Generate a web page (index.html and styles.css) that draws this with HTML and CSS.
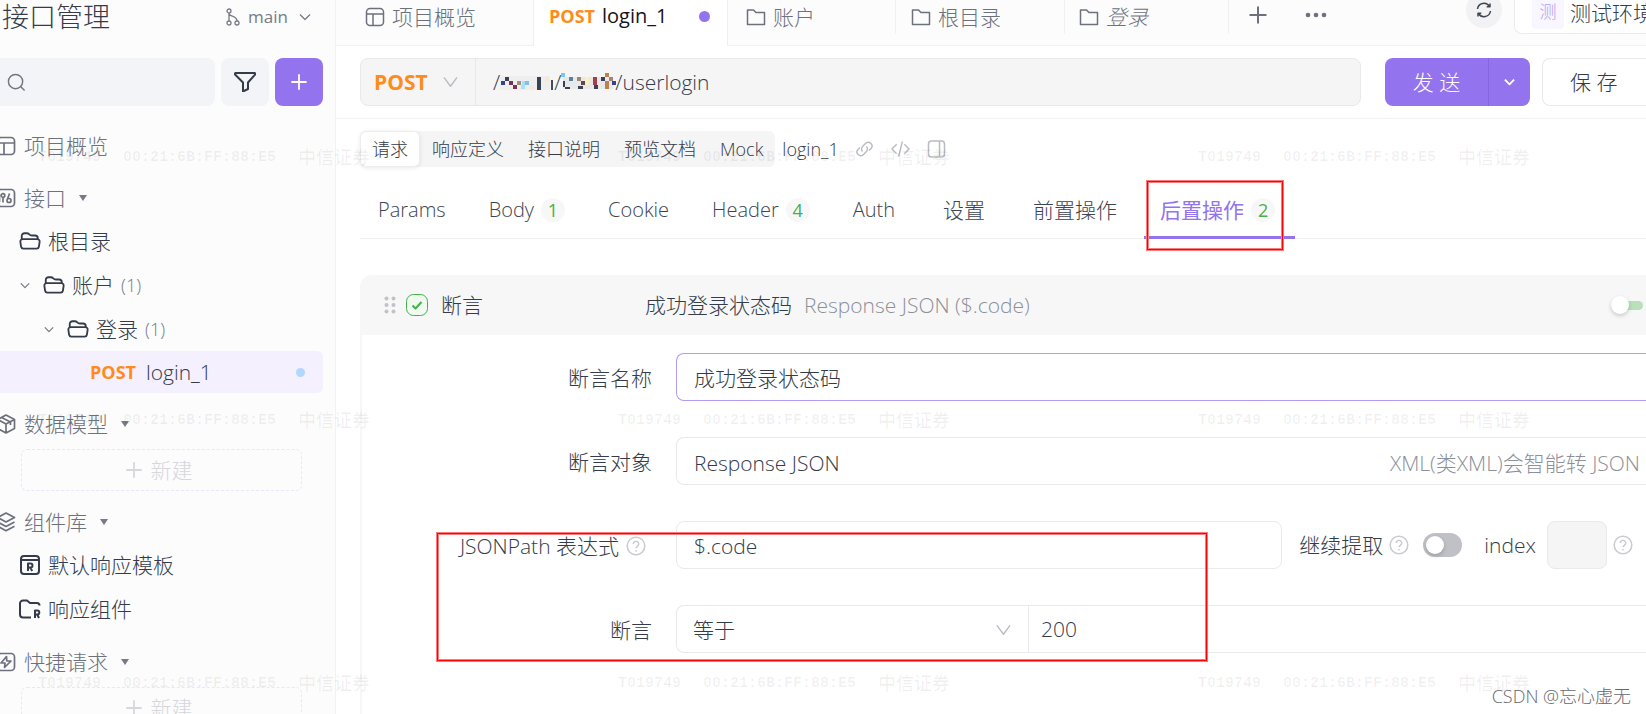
FILE: index.html
```html
<!DOCTYPE html>
<html lang="zh-CN">
<head>
<meta charset="utf-8">
<title>接口管理</title>
<link rel="stylesheet" href="styles.css">
</head>
<body>
<svg class="defs" aria-hidden="true">
  <symbol id="i-layout" viewBox="0 0 20 20"><rect x="1.5" y="1.5" width="17" height="17" rx="3.5"/><path d="M1.5 7h17M8 7v11.5"/></symbol>
  <symbol id="i-folder" viewBox="0 0 20 20"><path d="M1.5 3h6l2.500 2.500h8.500v12h-17z"/></symbol>
  <symbol id="i-open" viewBox="0 0 24 20"><path d="M3 9V4.500a3 3 0 0 1 3-3h2.500c3 0 2.500 2.500 5.500 2.500h3.500a3 3 0 0 1 3 3V8.500M4 8h16a2.500 2.500 0 0 1 2.500 3l-.8 5.300a2.500 2.500 0 0 1-2.500 2H4.800a2.500 2.500 0 0 1-2.500-2L1.500 11A2.500 2.500 0 0 1 4 8z"/></symbol>
  <symbol id="i-down" viewBox="0 0 12 8"><path d="M1 1.500l5 5 5-5"/></symbol>
  <symbol id="i-wide" viewBox="0 0 16 12"><path d="M1 1l7 9.500L15 1"/></symbol>
  <symbol id="i-plus" viewBox="0 0 20 20"><path d="M10 1.500v17M1.500 10h17"/></symbol>
  <symbol id="i-help" viewBox="0 0 20 20"><circle cx="10" cy="10" r="8.800"/><path d="M7.300 8a2.700 2.700 0 1 1 4.200 2.200c-1 .7-1.500 1-1.500 2M10 14v1.500"/></symbol>
</svg>

<div class="app">
  <aside class="sidebar">
    <header class="side-head">
      <h1>接口管理</h1>
      <button class="branch" type="button">
        <svg class="branch-icon" viewBox="0 0 14 18"><circle cx="3" cy="3" r="2"/><circle cx="3" cy="15" r="2"/><circle cx="11" cy="15" r="2"/><path d="M3 5v8M3 6c1 3 8 1 8 7"/></svg>
        <span>main</span>
        <svg class="chev"><use href="#i-down"/></svg>
      </button>
    </header>

    <div class="side-tools">
      <label class="search">
        <svg viewBox="0 0 20 20"><circle cx="9" cy="9" r="7.500"/><path d="M14.500 14.500L18.500 18.500"/></svg>
        <input type="text" aria-label="搜索">
      </label>
      <button class="tool" type="button" aria-label="筛选"><svg viewBox="0 0 22 20"><path d="M2 1h18a1 1 0 0 1 .8 1.800L14 10.500V17l-5 2.500v-9L1.300 2.800A1 1 0 0 1 2 1z"/></svg></button>
      <button class="tool tool-add" type="button" aria-label="新建"><svg><use href="#i-plus"/></svg></button>
    </div>

    <nav class="tree">
      <a class="section" href="#"><svg><use href="#i-layout"/></svg>项目概览</a>
      <a class="section" href="#"><svg viewBox="0 0 20 20"><rect x="1.500" y="1.500" width="17" height="17" rx="3.500"/><circle cx="7" cy="7.500" r="1.800"/><path d="M7 9.500V14.500M3.500 6v8M13.500 5.500L11.500 11"/><circle cx="13" cy="12.500" r="2"/></svg>接口<i class="caret"></i></a>
      <a class="node lv1" href="#"><svg><use href="#i-open"/></svg>根目录</a>
      <a class="node lv2" href="#"><svg class="fold"><use href="#i-down"/></svg><svg><use href="#i-open"/></svg>账户<span class="count">(1)</span></a>
      <a class="node lv3" href="#"><svg class="fold"><use href="#i-down"/></svg><svg><use href="#i-open"/></svg>登录<span class="count">(1)</span></a>
      <a class="node leaf" href="#"><b>POST</b>login_1<i class="dot"></i></a>
      <a class="section" href="#"><svg viewBox="0 0 20 20"><path d="M10 1l8.500 4.500v9L10 19l-8.500-4.500v-9zM1.500 5.500L10 10l8.500-4.500M10 10v9M5.500 3.500L14.500 8v3"/></svg>数据模型<i class="caret"></i></a>
      <button class="create" type="button"><svg><use href="#i-plus"/></svg>新建</button>
      <a class="section" href="#"><svg viewBox="0 0 20 20"><path d="M10 1l8.500 4.500L10 10 1.500 5.500zM1.500 10L10 14.500 18.500 10M1.500 14.200L10 18.700l8.500-4.500"/></svg>组件库<i class="caret"></i></a>
      <a class="node lv1" href="#"><svg viewBox="0 0 22 20"><rect x="2" y="1" width="18" height="18" rx="3"/><path d="M2 5h18M9 16V8.500h2.500a2 2 0 0 1 0 4H9M11.200 12.500l2 3.500"/></svg>默认响应模板</a>
      <a class="node lv1" href="#"><svg viewBox="0 0 22 20"><path d="M12 18.500H4a3 3 0 0 1-3-3v-11a3 3 0 0 1 3-3h4l3 2.500h7a2.500 2.500 0 0 1 2.500 2.500M16 19v-7.500h2.300a2 2 0 0 1 0 4H16M18.200 15.500L20 19"/></svg>响应组件</a>
      <a class="section" href="#"><svg viewBox="0 0 20 20"><rect x="1.500" y="1.500" width="17" height="17" rx="3.500"/><path d="M10.500 4.500L5 11h4l-.5 4.500L15 9h-4.200z"/></svg>快捷请求<i class="caret"></i></a>
      <button class="create" type="button"><svg><use href="#i-plus"/></svg>新建</button>
    </nav>
  </aside>

  <main class="main">
    <div class="tabbar">
      <a class="tab tab-first" href="#"><svg><use href="#i-layout"/></svg>项目概览</a>
      <a class="tab tab-active" href="#"><b>POST</b>login_1<i class="dot"></i></a>
      <a class="tab" href="#"><svg><use href="#i-folder"/></svg>账户</a>
      <a class="tab" href="#"><svg><use href="#i-folder"/></svg>根目录</a>
      <a class="tab" href="#"><svg><use href="#i-folder"/></svg><em>登录</em></a>
      <button class="tab-btn" type="button" aria-label="新标签"><svg><use href="#i-plus"/></svg></button>
      <button class="tab-btn" type="button" aria-label="更多"><svg class="more" viewBox="0 0 22 6"><circle cx="3" cy="3" r="2.300"/><circle cx="11" cy="3" r="2.300"/><circle cx="19" cy="3" r="2.300"/></svg></button>
      <button class="sync" type="button" aria-label="刷新"><svg viewBox="0 0 16 16"><path d="M1.500 7A6.500 6.500 0 0 1 13.500 4.500M14.500 9A6.500 6.500 0 0 1 2.500 11.500M14 1.500v3.300h-3.300M2 14.500v-3.300h3.300"/></svg></button>
      <button class="env" type="button"><span>测</span>测试环境</button>
    </div>

    <div class="request">
      <div class="url">
        <div class="pick pick-method">
          <select aria-label="请求方法"><option>POST</option></select>
          <svg><use href="#i-wide"/></svg>
        </div>
        <div class="path">
          <span>/</span>
          <svg viewBox="0 -3 54 20"><path fill="#eeeeef" d="M0 1h50v14H0z"/><path fill="#3b3f8c" d="M1 6h4v4H1z"/><path fill="#3a4152" d="M5 2h4v4H5zM37 2h4v13h-4z"/><path fill="#a08f80" d="M17 6h4v4h-4z"/><path fill="#7b3350" d="M9 6h4v4H9zM13 10h4v4h-4z"/><path fill="#a9dcf7" d="M21 10h4v4h-4zM22 6h5v4h-5z"/><path fill="#82bff0" d="M25 6h4v4h-4z"/><path fill="#f5e8d4" d="M30 10h4v4h-4zM45 2h4v4h-4z"/><path fill="#454b5a" d="M51 5h2v10h-2z"/></svg>
          <span>/</span>
          <svg viewBox="0 -3 54 20"><path fill="#e9e9ea" d="M2 2h50v12H2z"/><path fill="#7cc4f5" d="M0-2h4v4H0z"/><path fill="#3a4152" d="M2 6h2v6H2zM4 12h5v2H4zM17 11h5v3h-5zM33 10h4v4h-4zM40 2h4v4h-4z"/><path fill="#5d7f9e" d="M8 2h4v4H8z"/><path fill="#9d8875" d="M16 2h4v4h-4zM48 2h4v4h-4z"/><path fill="#5b4a50" d="M20 6h4v4h-4z"/><path fill="#f7f2c4" d="M24 2h4v8h-4z"/><path fill="#a33d50" d="M32 2h4v8h-4z"/><path fill="#bd8150" d="M44-2h4v4h-4zM44 6h4v8h-4z"/><path fill="#3b3f8c" d="M51 6h4v4h-4z"/></svg>
          <input type="text" value="/userlogin" aria-label="接口路径">
        </div>
      </div>
      <div class="send">
        <button type="button">发 送</button>
        <button class="send-more" type="button" aria-label="更多发送选项"><svg><use href="#i-down"/></svg></button>
      </div>
      <button class="save" type="button">保 存</button>
    </div>

    <div class="views">
      <div class="segments">
        <button class="on" type="button">请求</button>
        <button type="button">响应定义</button>
        <button type="button">接口说明</button>
        <button type="button">预览文档</button>
        <button type="button">Mock</button>
      </div>
      <span class="name">login_1</span>
      <svg viewBox="0 0 18 18"><path d="M7 11.500a4 4 0 0 1 .5-5.500l3-3a3.800 3.800 0 0 1 5.300 5.300L13.500 10.500M11 6.500a4 4 0 0 1-.5 5.500l-3 3a3.800 3.800 0 0 1-5.300-5.300L4.500 7.500"/></svg>
      <svg viewBox="0 0 20 18"><path d="M6 4L1 9l5 5M14 4l5 5-5 5M12 1L8 17"/></svg>
      <svg viewBox="0 0 18 18"><rect x="1" y="1" width="16" height="16" rx="3"/><path d="M12 1v16"/></svg>
    </div>

    <nav class="params">
      <a href="#">Params</a>
      <a href="#">Body<span>1</span></a>
      <a href="#">Cookie</a>
      <a href="#">Header<span>4</span></a>
      <a href="#">Auth</a>
      <a class="zh" href="#">设置</a>
      <a class="zh" href="#">前置操作</a>
      <a class="zh on" href="#">后置操作<span>2</span></a>
    </nav>

    <section class="card">
      <header class="card-head">
        <svg class="grip" viewBox="0 0 12 18"><circle cx="2.500" cy="2.500" r="2"/><circle cx="9.500" cy="2.500" r="2"/><circle cx="2.500" cy="9" r="2"/><circle cx="9.500" cy="9" r="2"/><circle cx="2.500" cy="15.500" r="2"/><circle cx="9.500" cy="15.500" r="2"/></svg>
        <svg class="ok" viewBox="0 0 22 22"><rect x=".5" y=".5" width="21" height="21" rx="7"/><path d="M6.500 11.500l3 3 6-6.500"/></svg>
        <strong>断言</strong>
        <span>成功登录状态码</span>
        <small>Response JSON ($.code)</small>
        <input class="switch-slim" type="checkbox" aria-label="启用">
      </header>
      <form class="form">
        <label for="f-name">断言名称</label>
        <input id="f-name" class="field focus" type="text" value="成功登录状态码">

        <label for="f-target">断言对象</label>
        <div class="pick field">
          <select id="f-target"><option>Response JSON</option></select>
          <span class="hint">XML(类XML)会智能转 JSON</span>
        </div>

        <label for="f-path" class="with-help">JSONPath 表达式<svg class="help"><use href="#i-help"/></svg></label>
        <div class="line">
          <input id="f-path" class="field closed" type="text" value="$.code">
          <label for="f-more">继续提取</label>
          <svg class="help"><use href="#i-help"/></svg>
          <input id="f-more" class="switch" type="checkbox">
          <label for="f-index">index</label>
          <input id="f-index" class="index" type="text" disabled>
          <svg class="help"><use href="#i-help"/></svg>
        </div>

        <label for="f-op">断言</label>
        <div class="compare field">
          <div class="pick">
            <select id="f-op"><option>等于</option></select>
            <svg><use href="#i-wide"/></svg>
          </div>
          <input type="text" value="200" aria-label="期望值">
        </div>
      </form>
    </section>
  </main>

  <div class="watermark" aria-hidden="true">
    <p>T019749<span>00:21:6B:FF:88:E5</span><em>中信证券</em></p>
    <p>T019749<span>00:21:6B:FF:88:E5</span><em>中信证券</em></p>
    <p>T019749<span>00:21:6B:FF:88:E5</span><em>中信证券</em></p>
    <p>T019749<span>00:21:6B:FF:88:E5</span><em>中信证券</em></p>
    <p>T019749<span>00:21:6B:FF:88:E5</span><em>中信证券</em></p>
    <p>T019749<span>00:21:6B:FF:88:E5</span><em>中信证券</em></p>
    <p>T019749<span>00:21:6B:FF:88:E5</span><em>中信证券</em></p>
    <p>T019749<span>00:21:6B:FF:88:E5</span><em>中信证券</em></p>
    <p>T019749<span>00:21:6B:FF:88:E5</span><em>中信证券</em></p>
  </div>
  <div class="mark mark-tab"></div>
  <div class="mark mark-form"></div>
  <div class="credit">CSDN @忘心虚无</div>
</div>
</body>
</html>
```

FILE: styles.css
```css
* { box-sizing: border-box; }
html, body { height: 100%; }
body {
  margin: 0;
  overflow: hidden;
  background: #fff;
  color: #343b4a;
  font: 300 21px/30px "Open Sans", "Noto Sans CJK SC", sans-serif;
}
a { color: inherit; text-decoration: none; }
button, input, select { font: inherit; color: inherit; margin: 0; padding: 0; border: 0; background: none; outline: 0; min-width: 0; }
button { cursor: pointer; white-space: nowrap; }
select { appearance: none; }
svg { fill: none; stroke: currentColor; stroke-width: 2; stroke-linejoin: round; flex: none; }
.defs { display: none; }
i { flex: none; }

.app { position: relative; display: flex; height: 100vh; overflow: hidden; }

/* sidebar */
.sidebar { flex: none; width: 336px; padding-right: 12px; background: #fcfcfc; border-right: 1px solid #f2f2f4; overflow: hidden; }
.side-head { display: flex; align-items: center; justify-content: space-between; height: 34px; padding: 0 12px 0 2px; }
h1 { margin: 0; font-size: 27px; font-weight: 300; line-height: 36px; }
.branch { display: flex; align-items: center; gap: 8px; color: #767b87; font-size: 17px; font-weight: 400; }
.branch-icon { width: 14px; height: 18px; stroke-width: 1.3px; }
.branch .chev { width: 12px; height: 8px; margin-left: 3px; stroke-width: 1.3px; }
.side-tools { display: flex; gap: 6px; margin-top: 24px; }
.search { flex: 1; min-width: 0; display: flex; align-items: center; gap: 8px; height: 48px; padding-left: 7px; background: #f3f4f8; border-radius: 0 8px 8px 0; color: #70757f; }
.search svg { width: 19px; height: 19px; stroke-width: 1.5px; }
.search input { flex: 1; width: 0; }
.tool { flex: none; display: grid; place-items: center; width: 48px; height: 48px; background: #f3f4f8; border-radius: 8px; }
.tool svg { width: 22px; height: 20px; }
.tool-add { background: #9373ee; color: #fff; }
.tool-add svg { width: 18px; height: 18px; }
.tree { margin-top: 19px; }
.section { display: flex; align-items: center; height: 42px; color: #6c717d; }
.section + .section, .node + .section, .create + .section { margin-top: 10px; }
.section svg { width: 20px; height: 20px; margin: 0 8px 0 -4px; stroke-width: 1.7px; }
.caret { margin-left: 13px; border: 4px solid transparent; border-top: 6px solid #767b87; border-bottom: 0; }
.node { display: flex; align-items: center; height: 44px; }
.node svg { width: 22px; height: 20px; margin-right: 7px; }
.node svg.fold { width: 10px; height: 7px; margin-right: 13px; color: #767b87; stroke-width: 1.5px; }
.lv1 { padding-left: 19px; }
.lv2 { padding-left: 20px; }
.lv3 { padding-left: 44px; }
.count { margin-left: 7px; font-size: 18px; color: #757a85; }
.leaf { height: 42px; padding: 0 18px 0 90px; background: #f4f0fd; border-radius: 0 6px 6px 0; }
b { color: #ff8c1a; font-weight: 700; font-size: 18px; }
.leaf b { margin-right: 10px; }
.dot { width: 9px; height: 9px; margin-left: auto; border-radius: 50%; background: #b2d7ff; }
.create { display: flex; align-items: center; justify-content: center; gap: 8px; width: 281px; height: 42px; margin: 4px 0 0 21px; padding-right: 6px; border: 1px dashed #e9e6fb; border-radius: 6px; color: #d6d7db; }
.create svg { width: 18px; height: 18px; }

/* tabs of open documents */
.main { flex: 1; min-width: 0; }
.tabbar { display: flex; height: 46px; background: #fcfcfc; border-bottom: 1px solid #f2f2f4; color: #6c717d; }
.tab { display: flex; align-items: center; gap: 7px; height: 34px; padding: 0 18px; border-right: 1px solid #f0f0f2; white-space: nowrap; }
.tab svg { width: 20px; height: 20px; stroke-width: 1.5px; }
.tab:nth-child(3) { width: 168px; }
.tab:nth-child(4) { width: 169px; padding-left: 15px; }
.tab:nth-child(5) { width: 164px; padding-left: 14px; }
.tab-first { width: 198px; height: 45px; padding: 0 18px 11px 29px; }
.tab-active { width: 194px; height: 46px; padding: 0 17px 14px 15px; background: #fff; color: #14161c; font-weight: 400; font-size: 20px; }
.tab-active .dot { width: 11px; height: 11px; background: #9373ee; }
.tab-btn { display: grid; place-items: center; width: 58px; height: 30px; }
.tab-btn svg { width: 20px; height: 20px; }
.tab-btn .more { width: 22px; height: 6px; fill: currentColor; stroke: none; }
.sync { display: grid; place-items: center; width: 36px; height: 36px; margin: -8px 12px 0 auto; border-radius: 50%; background: #f2f2f4; color: #3f4654; }
.sync svg { width: 16px; height: 16px; stroke-width: 1.5px; }
.env { display: flex; align-items: center; gap: 6px; width: 132px; height: 42px; margin-top: -8px; padding: 0 0 0 17px; overflow: hidden; background: #fff; border: solid #ececf0; border-width: 0 0 1px 1px; border-radius: 0 0 0 8px; line-height: 24px; color: #343b4a; }
.env span { flex: none; width: 32px; height: 32px; line-height: 30px; border-radius: 4px; background: #f8f6fe; color: #b49df5; font-size: 17px; text-align: center; }

/* request line */
.request { display: flex; padding: 12px 0 12px 24px; border-bottom: 1px solid #f2f2f4; }
.url { flex: 1; display: flex; height: 48px; margin-right: 24px; background: #f5f5f5; border: 1px solid #e9e9ec; border-radius: 8px; }
.pick { display: grid; align-items: center; }
.pick > * { grid-area: 1 / 1; }
.pick svg { justify-self: end; width: 15px; height: 12px; color: #b9bcc3; stroke-width: 1.5px; pointer-events: none; }
.pick-method { width: 115px; padding: 0 17px 0 13px; border-right: 1px solid #e9e9ec; color: #ff8c1a; font-weight: 700; }
.path { flex: 1; display: flex; align-items: center; padding-left: 17px; }
.path svg { width: 54px; height: 20px; stroke: none; overflow: visible; }
.path input { flex: 1; }
.send { display: flex; width: 145px; height: 48px; margin-right: 12px; border-radius: 8px; background: #9373ee; color: #fff; }
.send button { flex: 1; }
.send .send-more { flex: none; display: grid; place-items: center; width: 42px; border-left: 1px solid #8566de; }
.send-more svg { width: 11px; height: 8px; }
.save { width: 104px; padding-left: 27px; text-align: left; border: 1px solid #e9e9ec; border-right: 0; border-radius: 8px 0 0 8px; }

/* view switcher */
.views { display: flex; align-items: center; gap: 17px; margin: 12px 0 0 24px; font-size: 18px; color: #b9bcc3; }
.views > svg { width: 19px; height: 18px; stroke-width: 1.5px; }
.segments { display: flex; height: 36px; background: #f5f5f5; border-radius: 6px; color: #343b4a; }
.segments button { padding: 0 12px; border-radius: 6px; }
.segments .on { background: #fff; box-shadow: inset 0 0 0 1px #ececef, 0 1px 4px #00000018; }
.name { margin: 0 -1px 0 -10px; color: #343b4a; }

/* parameter tabs */
.params { display: flex; gap: 43px; margin: 14px 0 0 24px; padding-left: 18px; border-bottom: 1px solid #f0f0f2; color: #3d4452; font-size: 20px; }
.params a { display: flex; align-items: center; gap: 7px; height: 58px; margin-bottom: -1px; padding-top: 3px; border-bottom: 3px solid transparent; }
.params .zh { margin-left: 5px; font-size: 21px; }
.params span { width: 24px; height: 24px; border-radius: 50%; background: #f7f7f7; color: #44b04c; font-size: 18px; font-weight: 400; line-height: 24px; text-align: center; }
.params .on { color: #9373ee; font-weight: 400; border-color: #9373ee; margin-left: -16px; padding: 3px 20px 0 16px; }

/* assertion card */
.card { margin: 36px 0 0 24px; height: 500px; border-left: 2px solid #f7f7f7; border-radius: 12px 0 0 0; }
.card-head { display: flex; align-items: center; height: 60px; padding: 0 3px 0 22px; background: #f7f7f7; border-radius: 10px 0 0 0; line-height: 32px; }
.grip { width: 12px; height: 18px; margin-right: 10px; fill: #c0c2c7; stroke: none; }
.ok { width: 22px; height: 22px; margin-right: 13px; color: #44b04c; }
.ok rect { fill: #f0faf0; stroke-width: 1; }
strong { width: 204px; font-weight: inherit; }
small { margin-left: 12px; font-size: 21px; color: #8c9099; }
.form { display: grid; grid-template-columns: 290px 1fr; column-gap: 24px; row-gap: 36px; padding-top: 18px; line-height: 48px; }
.form > label { height: 48px; padding-top: 1px; text-align: right; white-space: nowrap; }
.field { width: 100%; height: 48px; padding: 1px 0 0 17px; background: #fff; border: 1px solid #e8e9ed; border-right: 0; border-radius: 8px 0 0 8px; }
.focus { border-color: #b39af5; }
.hint { justify-self: end; margin-right: 6px; color: #8c9099; pointer-events: none; }
.line { display: flex; align-items: center; gap: 6px; padding-right: 13px; }
.line .closed { flex: 1; margin-right: 11px; border-right: 1px solid #e8e9ed; border-radius: 8px; }
.help { width: 20px; height: 20px; color: #c9cbd0; stroke-width: 1.5px; }
.form > .with-help { display: flex; align-items: center; justify-content: flex-end; gap: 7px; padding-right: 6px; }
.index { width: 60px; height: 48px; margin-left: 5px; background: #f5f5f5; border: 1px solid #e9e9ec; border-radius: 8px; }
.compare { display: flex; padding: 0; }
.compare .pick { width: 352px; padding: 0 17px 0 16px; border-right: 1px solid #e8e9ed; }
.compare > input { flex: 1; padding-left: 12px; }

input[type="checkbox"] { appearance: none; flex: none; display: flex; align-items: center; }
.switch { width: 39px; height: 24px; margin: 0 16px 0 8px; padding-left: 3px; border-radius: 12px; background: #bfc1c6; }
.switch::before, .switch-slim::before { content: ""; width: 18px; height: 18px; border-radius: 50%; background: #fff; box-shadow: 0 2px 4px #00230b33; }
.switch-slim { width: 32px; height: 9px; margin-left: auto; border-radius: 5px; background: #b9dfbb; }

/* overlays */
.watermark { position: absolute; top: 142px; left: 38px; display: grid; grid-template-columns: repeat(3, 580px); grid-auto-rows: 263px; color: #0000000f; font: 700 15px/32px "Liberation Mono", monospace; pointer-events: none; }
.watermark p { display: flex; gap: 22px; margin: 0; white-space: nowrap; }
.watermark em { font: 500 18px/28px "Noto Sans CJK SC", sans-serif; }
.mark { position: absolute; border: 1px solid #f00; box-shadow: 0 0 0 1px #ff7a7a, inset 0 0 0 1px #ff7a7a; pointer-events: none; }
.mark-tab { top: 181px; left: 1147px; width: 136px; height: 69px; }
.mark-form { top: 533px; left: 437px; width: 770px; height: 128px; }
.credit { position: absolute; right: 15px; bottom: 4px; color: #66686c; font-size: 18px; line-height: 28px; text-shadow: 1px 1px 1px #fff; }
```
